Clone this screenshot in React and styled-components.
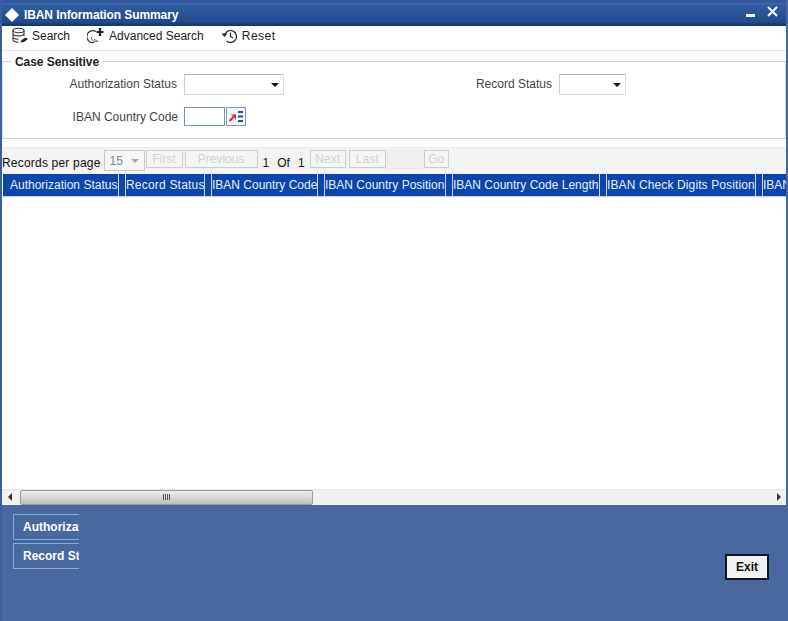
import React from 'react';
import styled, { createGlobalStyle } from 'styled-components';

const Global = createGlobalStyle`
  html, body { margin: 0; padding: 0; background: #fff; }
  body { font-family: "Liberation Sans", Arial, sans-serif; font-size: 12px; }
`;

const Window = styled.div`
  width: 788px;
  height: 621px;
  box-sizing: border-box;
  display: flex;
  flex-direction: column;
  overflow: hidden;
  background: #fff;
  border-left: 2px solid #3a5f9e;
  border-right: 2px solid #4a68a0;
`;

const TitleBar = styled.div`
  height: 26px;
  flex: none;
  box-sizing: border-box;
  margin: 0 -2px;
  padding: 4px 10px 0 5px;
  display: flex;
  align-items: center;
  background: linear-gradient(#30599f 0, #30599f 3px, #4a6ca6 3px, #2f5da3 5px, #214a8c 22px, #17356d 25px);
`;

const Diamond = styled.span`
  width: 14px;
  height: 14px;
  flex: none;
  margin-right: 5px;
  display: flex;
`;

const Title = styled.span`
  flex: 1;
  color: #fff;
  font-weight: bold;
  font-size: 12px;
  letter-spacing: -0.1px;
`;

const WinButtons = styled.div`
  display: flex;
  align-items: flex-start;
  gap: 12px;
  margin-top: -8px;
`;

const Toolbar = styled.div`
  height: 25px;
  flex: none;
  box-sizing: border-box;
  display: flex;
  align-items: center;
  padding: 0 0 4px 9px;
  border-bottom: 1px solid #e4e4e4;
`;

const ToolItem = styled.div`
  display: flex;
  align-items: center;
  gap: ${(p) => p.$iconGap}px;
  margin-right: ${(p) => p.$gap}px;
  letter-spacing: ${(p) => p.$ls || 0}px;
  color: #222;
  font-size: 12px;
`;

const Fieldset = styled.fieldset`
  height: 86px;
  flex: none;
  box-sizing: border-box;
  margin: 2px 0 0 0;
  padding: 0;
  border: 1px solid #c3d6e4;
  border-left: 1px solid #d5e2ec;
`;

const Legend = styled.legend`
  margin-left: 9px;
  padding: 2px 3px 0;
  font-weight: bold;
  font-size: 12px;
  line-height: 14px;
  letter-spacing: -0.05px;
  color: #222;
`;

const FormRow = styled.div`
  display: flex;
  align-items: center;
  height: ${(p) => p.$h}px;
  margin-top: ${(p) => p.$top}px;
`;

const Label = styled.label`
  width: ${(p) => p.$w}px;
  margin-right: ${(p) => p.$mr}px;
  padding-bottom: ${(p) => p.$raise || 0}px;
  text-align: right;
  color: #444;
  font-size: 12px;
  flex: none;
`;

const Select = styled.div`
  width: ${(p) => p.$w}px;
  height: 21px;
  box-sizing: border-box;
  flex: none;
  display: flex;
  align-items: center;
  justify-content: flex-end;
  padding-right: 4px;
  background: #fff;
  border: 1px solid #dcdcdc;
  border-top-color: #b4b4b4;
  border-left-color: #cfcfcf;
`;

const Caret = styled.span`
  width: 0;
  height: 0;
  border-left: 4px solid transparent;
  border-right: 4px solid transparent;
  border-top: 4px solid ${(p) => p.$color};
  margin-top: 1px;
`;

const TextInput = styled.div`
  width: 41px;
  height: 19px;
  box-sizing: border-box;
  flex: none;
  background: #fff;
  border: 1px solid #6c94bd;
`;

const LovButton = styled.div`
  width: 20px;
  height: 19px;
  margin-left: 1px;
  flex: none;
  box-sizing: border-box;
  display: flex;
  align-items: center;
  justify-content: center;
  background: #f4f6f8;
  border: 1px solid #7d9cbc;
`;

const Spacer = styled.div`
  width: ${(p) => p.$w}px;
  flex: none;
`;

const Pager = styled.div`
  height: 27px;
  flex: none;
  margin: 8px 0 0 -2px;
  box-sizing: border-box;
  display: flex;
  align-items: flex-start;
  padding: 2px 0 0 2px;
  background: #f3f3f3;
  border-top: 1px solid #ececec;
`;

const PagerText = styled.span`
  margin-left: ${(p) => p.$ml}px;
  margin-top: 6px;
  letter-spacing: ${(p) => p.$ls || 0}px;
  color: #111;
  font-size: 12px;
  line-height: 14px;
`;

const PageSelect = styled.div`
  width: 41px;
  height: 21px;
  box-sizing: border-box;
  flex: none;
  margin-left: 3px;
  padding: 0 5px;
  display: flex;
  align-items: center;
  justify-content: space-between;
  color: #8a8a8a;
  font-size: 12px;
  background: #f6f6f6;
  border: 1px solid #c8c8c8;
`;

const PageButton = styled.div`
  width: ${(p) => p.$w}px;
  height: 18px;
  box-sizing: border-box;
  flex: none;
  margin-left: ${(p) => p.$ml}px;
  display: flex;
  align-items: center;
  justify-content: center;
  color: #d2d2d2;
  font-size: 12px;
  background: #f5f5f5;
  border: 1px solid #cdcdcd;
`;

const PageInput = styled.div`
  width: 36px;
  height: 19px;
  box-sizing: border-box;
  flex: none;
  margin-left: 1px;
  background: #f0f0f0;
  border: 1px solid #e8e8e8;
`;

const HeaderRow = styled.div`
  height: 23px;
  flex: none;
  display: flex;
  margin-left: 1px;
  overflow: hidden;
  background: #0a46ab;
  border-bottom: 1px solid #c9cdd6;
  box-sizing: border-box;
`;

const HeaderCell = styled.div`
  width: ${(p) => p.$w}px;
  flex: none;
  box-sizing: border-box;
  padding-left: ${(p) => p.$pl}px;
  line-height: 23px;
  letter-spacing: ${(p) => p.$ls || 0}px;
  color: #e8eefa;
  font-size: 12px;
  white-space: nowrap;
  overflow: hidden;
  border-left: ${(p) => (p.$first ? 'none' : '1px solid #e3c9a4')};
`;

const Divider = styled.div`
  width: 7px;
  flex: none;
  box-sizing: border-box;
  border-left: 1px solid #c3d4ee;
`;

const TableBody = styled.div`
  flex: 1;
  background: #fff;
`;

const ScrollBar = styled.div`
  height: 16px;
  flex: none;
  box-sizing: border-box;
  display: flex;
  align-items: center;
  background: #f0f0f0;
  border-top: 1px solid #e6e6e6;
  border-bottom: 1px solid #f4f4f4;
`;

const ScrollArrow = styled.span`
  width: 0;
  height: 0;
  flex: none;
  margin: ${(p) => p.$margin};
  border-top: 4px solid transparent;
  border-bottom: 4px solid transparent;
  ${(p) => (p.$right ? 'border-left: 4px solid #333;' : 'border-right: 4px solid #333;')}
`;

const ScrollThumb = styled.div`
  width: 293px;
  height: 15px;
  flex: none;
  box-sizing: border-box;
  display: flex;
  align-items: center;
  justify-content: center;
  gap: 1px;
  background: linear-gradient(#ececec, #d8d8d8 50%, #bdbdbd);
  border: 1px solid #9a9a9a;
  border-radius: 2px;
`;

const Grip = styled.span`
  width: 1px;
  height: 6px;
  background: #555;
`;

const ScrollGap = styled.div`
  flex: 1;
`;

const Footer = styled.div`
  height: 116px;
  flex: none;
  margin: 0 -2px;
  box-sizing: border-box;
  padding: 9px 19px 0 13px;
  display: flex;
  justify-content: space-between;
  background: #4a68a0;
`;

const FooterTabs = styled.div`
  display: flex;
  flex-direction: column;
  gap: 3px;
`;

const FooterTab = styled.div`
  width: 66px;
  height: 26px;
  box-sizing: border-box;
  padding-left: 9px;
  line-height: 24px;
  overflow: hidden;
  white-space: nowrap;
  color: #fff;
  font-weight: bold;
  font-size: 12px;
  border: 1px solid #78aee0;
  border-right: none;
`;

const ExitButton = styled.div`
  width: 44px;
  height: 26px;
  margin-top: 40px;
  box-sizing: border-box;
  display: flex;
  align-items: center;
  justify-content: center;
  color: #111;
  font-weight: bold;
  font-size: 12px;
  background: #f2f2f2;
  border: 2px solid #0f1626;
`;

const SearchIcon = () => (
  <svg width="18" height="18" viewBox="0 0 18 18" fill="none" stroke="#333" strokeWidth="1.1">
    <ellipse cx="7.5" cy="3.5" rx="5.5" ry="2.2" fill="#fff" />
    <path d="M2 3.5v9.5c0 1.3 2.5 2.2 5.5 2.2M13 3.5V9M2 6.7c0 1.3 2.5 2.2 5.5 2.2s5.5-.9 5.5-2.2M2 10c0 1.3 2.5 2.2 5.5 2.2" />
    <path d="M9.5 15.5l1-2.5 4-2.5 2.5 1.5-4 3z" fill="#222" stroke="none" />
  </svg>
);

const AdvancedIcon = () => (
  <svg width="18" height="18" viewBox="0 0 18 18" fill="none" stroke="#333" strokeWidth="1.2">
    <path d="M9 4.5A6 6 0 1 0 7 15.5" />
    <path d="M4.5 10a4 4 0 0 0 6 4M7 12l4 3" strokeWidth="1" stroke="#666" />
    <path d="M13 1v8M9.5 5h7" strokeWidth="2.2" stroke="#222" />
  </svg>
);

const ResetIcon = () => (
  <svg width="17" height="16" viewBox="0 0 17 16" fill="none" stroke="#333" strokeWidth="1.3">
    <path d="M3.8 6.5A6 6 0 1 1 5.5 13" />
    <path d="M0.5 5.5h6l-3 3.5z" fill="#222" stroke="none" />
    <path d="M9.5 4.5v4l2.5 1.5" />
  </svg>
);

const LovIcon = () => (
  <svg width="16" height="13" viewBox="0 0 16 13">
    <path d="M1.5 11L5.5 7" stroke="#e8261c" strokeWidth="2" />
    <path d="M3 4.5h5v5z" fill="#e8261c" />
    <path d="M10 2h5M10 6.5h5M10 11h5" stroke="#1d4f9c" strokeWidth="2" />
  </svg>
);

const columns = [
  { name: 'Authorization Status', w: 115, pl: 7, first: true },
  { name: 'Record Status', w: 79, pl: 0, ls: 0.2 },
  { name: 'IBAN Country Code', w: 106, pl: 0 },
  { name: 'IBAN Country Position', w: 121, pl: 0 },
  { name: 'IBAN Country Code Length', w: 147, pl: 0 },
  { name: 'IBAN Check Digits Position', w: 149, pl: 0, ls: 0.12 },
  { name: 'IBAN Check Digits Length', w: 60, pl: 0 },
];

export default function App() {
  return (
    <>
      <Global />
      <Window>
        <TitleBar>
          <Diamond>
            <svg width="14" height="14" viewBox="0 0 14 14">
              <path d="M7 0L14 7 7 14 0 7z" fill="#fff" />
            </svg>
          </Diamond>
          <Title>IBAN Information Summary</Title>
          <WinButtons>
            <svg width="9" height="11" viewBox="0 0 9 11">
              <path d="M0 8h9v3H0z" fill="#fff" />
            </svg>
            <svg width="11" height="11" viewBox="0 0 11 11">
              <path d="M1 1l9 9M10 1L1 10" stroke="#fff" strokeWidth="2" />
            </svg>
          </WinButtons>
        </TitleBar>
        <Toolbar>
          <ToolItem $gap={17} $iconGap={3}><SearchIcon />Search</ToolItem>
          <ToolItem $gap={17} $iconGap={4}><AdvancedIcon />Advanced Search</ToolItem>
          <ToolItem $gap={0} $iconGap={4} $ls={0.5}><ResetIcon />Reset</ToolItem>
        </Toolbar>
        <Fieldset>
          <Legend>Case Sensitive</Legend>
          <FormRow $h={21} $top={5}>
            <Label $w={174} $mr={7} $raise={2}>Authorization Status</Label>
            <Select $w={100}><Caret $color="#111" /></Select>
            <Spacer $w={191} />
            <Label $w={77} $mr={7} $raise={2}>Record Status</Label>
            <Select $w={67}><Caret $color="#111" /></Select>
          </FormRow>
          <FormRow $h={19} $top={12}>
            <Label $w={175} $mr={6}>IBAN Country Code</Label>
            <TextInput />
            <LovButton><LovIcon /></LovButton>
          </FormRow>
        </Fieldset>
        <Pager>
          <PagerText $ml={0} $ls={0.2}>Records per page</PagerText>
          <PageSelect>15<Caret $color="#aaa" /></PageSelect>
          <PageButton $w={37} $ml={1}>First</PageButton>
          <PageButton $w={73} $ml={2}>Previous</PageButton>
          <PagerText $ml={5}>1</PagerText>
          <PagerText $ml={8}>Of</PagerText>
          <PagerText $ml={8}>1</PagerText>
          <PageButton $w={36} $ml={5}>Next</PageButton>
          <PageButton $w={37} $ml={3}>Last</PageButton>
          <PageInput />
          <PageButton $w={25} $ml={1}>Go</PageButton>
        </Pager>
        <HeaderRow>
          {columns.map((c, i) => (
            <React.Fragment key={c.name}>
              <HeaderCell $w={c.w} $pl={c.pl} $first={c.first} $ls={c.ls}>{c.name}</HeaderCell>
              {i < columns.length - 1 && <Divider />}
            </React.Fragment>
          ))}
        </HeaderRow>
        <TableBody />
        <ScrollBar>
          <ScrollArrow $margin="0 8px 0 6px" />
          <ScrollThumb><Grip /><Grip /><Grip /><Grip /></ScrollThumb>
          <ScrollGap />
          <ScrollArrow $right $margin="0 5px 0 0" />
        </ScrollBar>
        <Footer>
          <FooterTabs>
            <FooterTab>Authorization Status</FooterTab>
            <FooterTab>Record Status</FooterTab>
          </FooterTabs>
          <ExitButton>Exit</ExitButton>
        </Footer>
      </Window>
    </>
  );
}
